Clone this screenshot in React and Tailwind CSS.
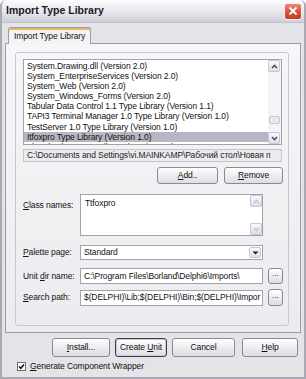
import React from 'react';

const items = [
  'System.Drawing.dll (Version 2.0)',
  'System_EnterpriseServices (Version 2.0)',
  'System_Web (Version 2.0)',
  'System_Windows_Forms (Version 2.0)',
  'Tabular Data Control 1.1 Type Library (Version 1.1)',
  'TAPI3 Terminal Manager 1.0 Type Library (Version 1.0)',
  'TestServer 1.0 Type Library (Version 1.0)',
  'Itfoxpro Type Library (Version 1.0)',
  'ThumbCtl 1.0 Type Library (Version 1.0)',
];

// underlined accelerator letter
const U = ({ children }) => <span className="underline underline-offset-1">{children}</span>;

const Btn = ({ className = '', children, isDefault }) => (
  <div
    className={`flex items-center justify-center rounded-[3px] border bg-gradient-to-b from-white to-[#dcdce2] text-[#111] ${
      isDefault ? 'border-[#3c3c44] shadow-[inset_0_0_0_1px_#c9cbd6]' : 'border-[#8a8a96]'
    } ${className}`}
  >
    {children}
  </div>
);

const ScrollArrow = ({ up, disabled }) => (
  <div className="w-[12px] h-[12px] flex items-center justify-center rounded-[2px] border border-[#c5c8d4] bg-gradient-to-b from-[#fafafc] to-[#dcdee8]">
    <svg width="7" height="5" viewBox="0 0 7 5">
      <path
        d={up ? 'M1 4 L3.5 1.5 L6 4' : 'M1 1 L3.5 3.5 L6 1'}
        fill="none"
        stroke={disabled ? '#c8c8d0' : '#4d5060'}
        strokeWidth="1.6"
      />
    </svg>
  </div>
);

const Field = ({ children, className = '' }) => (
  <div className={`flex items-center border border-[#9fa3ae] bg-white pl-[3px] overflow-hidden whitespace-nowrap ${className}`}>
    {children}
  </div>
);

const App = () => {
  return (
    <div
      className="w-[306px] h-[379px] overflow-hidden bg-[#e4e3e8] text-[8.5px] tracking-[-0.1px] text-[#111] flex flex-col border-x-[2px] border-b-[2px] border-[#a9a9b4] rounded-t-[6px]"
      style={{ fontFamily: 'Tahoma, "Liberation Sans", Arial, sans-serif' }}
    >
      {/* Title bar */}
      <div className="h-[23px] shrink-0 flex items-center justify-between pl-[4px] pr-[2px] bg-gradient-to-b from-[#fdfdfe] via-[#e8e8ee] to-[#cfcfda] border-b border-[#c2c2cc]">
        <span className="text-[10.5px] font-bold text-[#1b1b24] tracking-normal">Import Type Library</span>
        <div className="w-[18px] h-[17px] rounded-[3px] border border-[#f2f2f2] bg-gradient-to-b from-[#e98a7c] via-[#d9533f] to-[#c93a28] flex items-center justify-center">
          <svg width="10" height="10" viewBox="0 0 10 10">
            <path d="M1.5 1.5 L8.5 8.5 M8.5 1.5 L1.5 8.5" stroke="white" strokeWidth="1.8" />
          </svg>
        </div>
      </div>

      {/* Tabs */}
      <div className="pl-[6px] pt-[4px] flex">
        <div className="h-[17px] px-[5px] flex items-center border border-b-0 border-[#9c9ca8] rounded-t-[3px] bg-[#f4f4f6] shadow-[inset_0_2px_0_#e7b85a] relative z-10 -mb-px">
          Import Type Library
        </div>
      </div>

      {/* Tab sheet */}
      <div className="ml-[3px] w-[296px] h-[290px] shrink-0 border border-[#9c9ca8] bg-gradient-to-b from-[#f6f6f8] to-[#ececf0] pt-[8px] pl-[9px]">
        <div className="w-[274px] h-[274px] border border-[#c7c7cf] rounded-[3px] pt-[6px] pl-[7px] flex flex-col">
          {/* List box */}
          <div className="w-[259px] h-[86px] border border-[#9fa3ae] bg-white flex">
            <div className="flex-1 overflow-hidden pt-[1px]">
              {items.map((t, i) => (
                <div
                  key={t}
                  className={`h-[10.1px] leading-[10.1px] pl-[3px] whitespace-nowrap ${
                    i === 7 ? 'bg-[#b6b7c2] text-[#111]' : ''
                  }`}
                >
                  {t}
                </div>
              ))}
            </div>
            <div className="w-[13px] bg-[#f4f4f8] flex flex-col justify-between">
              <ScrollArrow up />
              <div className="flex-1 flex flex-col justify-end pb-[8px]">
                <div className="h-[8px] mx-[1px] rounded-[2px] border border-[#c5c8d4] bg-[#e6e8f0]" />
              </div>
              <ScrollArrow />
            </div>
          </div>

          {/* Path */}
          <div className="mt-[4px] w-[259px] h-[13px] border border-[#c3c3cb] bg-[#ececef] pl-[3px] flex items-center whitespace-nowrap overflow-hidden text-[#222]">
            C:\Documents and Settings\vi.MAINKAMP\Рабочий стол\Новая п
          </div>

          {/* Add / Remove */}
          <div className="mt-[5px] w-[260px] flex justify-end gap-[6px]">
            <Btn className="w-[61px] h-[17px]">
              <span><U>A</U>dd..</span>
            </Btn>
            <Btn className="w-[59px] h-[17px]">
              <span><U>R</U>emove</span>
            </Btn>
          </div>

          {/* Class names */}
          <div className="mt-[10px] flex">
            <div className="w-[57px] pt-[5px]"><U>C</U>lass names:</div>
            <div className="w-[183px] h-[42px] border border-[#9fa3ae] bg-white flex">
              <div className="flex-1 pl-[4px] pt-[2px]">Ttfoxpro</div>
              <div className="w-[12px] flex flex-col justify-between">
                <ScrollArrow up disabled />
                <ScrollArrow disabled />
              </div>
            </div>
          </div>

          {/* Palette page */}
          <div className="mt-[9px] flex items-center">
            <div className="w-[57px]"><U>P</U>alette page:</div>
            <div className="w-[183px] h-[15px] border border-[#9fa3ae] bg-white flex items-center justify-between pl-[3px] pr-[1px]">
              <span>Standard</span>
              <div className="w-[12px] h-[11px] flex items-center justify-center rounded-[2px] border border-[#c5c8d4] bg-gradient-to-b from-[#fafafc] to-[#dcdee8]">
                <svg width="7" height="4" viewBox="0 0 7 4">
                  <path d="M0.5 0.5 L6.5 0.5 L3.5 3.5 Z" fill="#222" />
                </svg>
              </div>
            </div>
          </div>

          {/* Unit dir name */}
          <div className="mt-[8px] flex items-center">
            <div className="w-[57px]">Unit <U>d</U>ir name:</div>
            <Field className="w-[183px] h-[16px]">C:\Program Files\Borland\Delphi6\Imports\</Field>
            <Btn className="ml-[5px] w-[15px] h-[16px] text-[8px] items-end pb-[3px]">...</Btn>
          </div>

          {/* Search path */}
          <div className="mt-[5px] flex items-center">
            <div className="w-[57px]"><U>S</U>earch path:</div>
            <Field className="w-[183px] h-[16px]">$(DELPHI)\Lib;$(DELPHI)\Bin;$(DELPHI)\Impor</Field>
            <Btn className="ml-[5px] w-[15px] h-[17px] text-[8px] items-end pb-[3px]">...</Btn>
          </div>
        </div>
      </div>

      {/* Bottom buttons */}
      <div className="mt-[5px] pl-[50px] flex">
        <Btn className="w-[58px] h-[19px]">
          <span><U>I</U>nstall...</span>
        </Btn>
        <Btn isDefault className="ml-[5px] w-[52px] h-[19px]">
          <span>Create <U>U</U>nit</span>
        </Btn>
        <Btn className="ml-[5px] w-[63px] h-[19px]">Cancel</Btn>
        <Btn className="ml-[7px] w-[56px] h-[19px]">
          <U>H</U>elp
        </Btn>
      </div>

      {/* Checkbox */}
      <div className="mt-[3px] pl-[15px] flex items-center gap-[4px]">
        <div className="w-[9px] h-[9px] border border-[#6c6c78] bg-white flex items-center justify-center">
          <svg width="7" height="7" viewBox="0 0 7 7">
            <path d="M1 3.5 L2.8 5.3 L6 1.5" fill="none" stroke="#111" strokeWidth="1.6" />
          </svg>
        </div>
        <span><U>G</U>enerate Component Wrapper</span>
      </div>
    </div>
  );
};

export default App;
